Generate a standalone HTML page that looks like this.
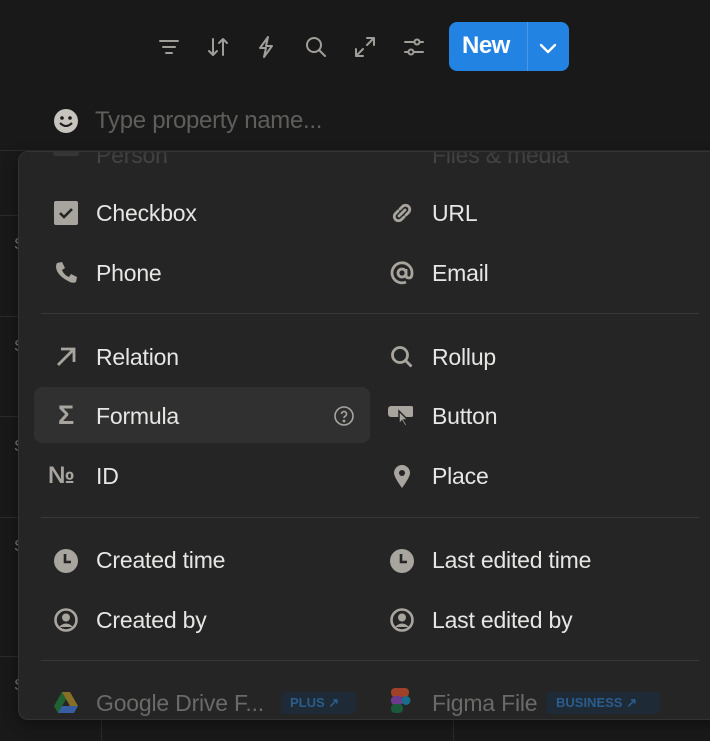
<!DOCTYPE html>
<html><head><meta charset="utf-8"><style>
*{margin:0;padding:0;box-sizing:border-box}
body{width:710px;height:741px;background:#191919;position:relative;overflow:hidden;font-family:"Liberation Sans",sans-serif;color:#e3e3e1}
.a{position:absolute}
.hl{position:absolute;left:0;height:1px;background:#2c2c2c}
.tb svg{position:absolute;top:35px}
.pop{position:absolute;left:18px;top:151px;width:720px;height:569px;background:#252525;border:1px solid #333;border-radius:10px;overflow:hidden;box-shadow:0 4px 14px rgba(0,0,0,.4)}
.it{position:absolute;font-size:23px;line-height:26px;color:#e6e6e4;white-space:nowrap;letter-spacing:-0.2px}
.ic{position:absolute;width:26px;height:26px}
.dv{position:absolute;left:22px;width:658px;height:1px;background:#383838}
</style></head><body>
<div class="hl" style="top:215px;width:20px"></div>
<div class="hl" style="top:316px;width:20px"></div>
<div class="hl" style="top:416px;width:20px"></div>
<div class="hl" style="top:517px;width:20px"></div>
<div class="hl" style="top:656px;width:20px"></div>
<div class="a" style="left:101px;top:720px;width:1px;height:21px;background:#2c2c2c"></div>
<div class="a" style="left:453px;top:720px;width:1px;height:21px;background:#2c2c2c"></div>
<div class="a" style="left:0;top:150px;width:710px;height:1px;background:#2c2c2c"></div>
<div class="a" style="left:14px;top:236px;font-size:16px;color:#777">S</div>
<div class="a" style="left:14px;top:338px;font-size:16px;color:#777">S</div>
<div class="a" style="left:14px;top:438px;font-size:16px;color:#777">S</div>
<div class="a" style="left:14px;top:538px;font-size:16px;color:#777">S</div>
<div class="a" style="left:14px;top:677px;font-size:16px;color:#777">S</div>

<div class="tb" style="stroke:#a09e99;fill:none;stroke-width:2;stroke-linecap:round;stroke-linejoin:round">
<svg style="left:157px" width="24" height="24"><path d="M3 6h18M6 12h12M9 18h6"/></svg>
<svg style="left:206px" width="24" height="24"><path d="M7 4v16M3 16l4 4 4-4M17 20V4M13 8l4-4 4 4"/></svg>
<svg style="left:254px" width="24" height="24"><path d="M14 2L6 13h6l-2 9 8-11h-6z"/></svg>
<svg style="left:304px" width="24" height="24"><circle cx="10" cy="10" r="7"/><path d="M15 15l6 6"/></svg>
<svg style="left:353px" width="24" height="24"><path d="M14 3h7v7M21 3l-7 7M10 21H3v-7M3 21l7-7"/></svg>
<svg style="left:402px" width="24" height="24"><path d="M3 7h18M3 17h18"/><circle cx="15" cy="7" r="2.5" fill="#191919"/><circle cx="9" cy="17" r="2.5" fill="#191919"/></svg>
</div>
<div class="a" style="left:449px;top:22px;width:120px;height:49px;background:#2383e2;border-radius:8px"></div>
<div class="a" style="left:527px;top:22px;width:1px;height:49px;background:#4a98e6"></div>
<div class="a" style="left:462px;top:32px;font-size:24px;font-weight:bold;color:#fff;letter-spacing:-0.5px">New</div>
<svg class="a" style="left:537px;top:38px" width="22" height="20"><path d="M4 7l7 7 7-7" stroke="#fff" stroke-width="2.4" fill="none" stroke-linecap="round" stroke-linejoin="round"/></svg>

<svg class="a" style="left:53px;top:108px" width="26" height="26"><circle cx="13" cy="13" r="12" fill="#c7c4bd"/><circle cx="9" cy="10" r="1.8" fill="#191919"/><circle cx="17" cy="10" r="1.8" fill="#191919"/><path d="M7 15q6 6 12 0" stroke="#191919" stroke-width="2" fill="none"/></svg>
<div class="a" style="left:95px;top:107px;font-size:24px;color:#5f5e5b;letter-spacing:-0.3px">Type property name...</div>

<div class="pop">
<div class="it" style="left:77px;top:-10px;color:#5a5a58">Person</div>
<div class="ic" style="left:34px;top:-8px;background:#4a4a48;border-radius:3px;height:12px"></div>
<div class="it" style="left:413px;top:-10px;color:#5a5a58">Files &amp; media</div>

<svg class="ic" style="left:34px;top:48px"><rect x="1" y="1" width="24" height="24" rx="2" fill="#a8a59f"/><path d="M7 13l4 4 8-8" stroke="#252525" stroke-width="2.6" fill="none"/></svg>
<div class="it" style="left:77px;top:48px">Checkbox</div>
<svg class="ic" style="left:370px;top:48px" fill="none" stroke="#a8a59f" stroke-width="2.8" stroke-linecap="round"><path d="M11 9l2.5-2.5a4 4 0 0 1 6 6L17 15M15 17l-2.5 2.5a4 4 0 0 1-6-6L9 11M10 16l6-6"/></svg>
<div class="it" style="left:413px;top:48px">URL</div>

<svg class="ic" style="left:34px;top:108px"><path d="M4 3l5-1 3 6-3 2q2 5 7 7l2-3 6 3-1 5q-3 2-8-1Q7 17 4 11 2 6 4 3z" fill="#a8a59f"/></svg>
<div class="it" style="left:77px;top:108px">Phone</div>
<svg class="ic" style="left:370px;top:108px" fill="none" stroke="#a8a59f" stroke-width="2.8"><circle cx="13" cy="13" r="4"/><path d="M17 9v6q0 3 3 3t3-5A10 10 0 1 0 17 22"/></svg>
<div class="it" style="left:413px;top:108px">Email</div>

<div class="dv" style="top:161px"></div>

<svg class="ic" style="left:34px;top:192px" fill="none" stroke="#a8a59f" stroke-width="2.8"><path d="M5 21L20 6M8 5h13v13"/></svg>
<div class="it" style="left:77px;top:192px">Relation</div>
<svg class="ic" style="left:370px;top:192px" fill="none" stroke="#a8a59f" stroke-width="2.8"><circle cx="11" cy="11" r="7.5"/><path d="M16.5 16.5l6 6"/></svg>
<div class="it" style="left:413px;top:192px">Rollup</div>

<div style="position:absolute;left:15px;top:235px;width:336px;height:56px;background:#303030;border-radius:8px"></div>
<div class="it" style="left:34px;top:250px;color:#a8a59f;font-size:27px;font-weight:bold;width:26px;text-align:center">Σ</div>
<div class="it" style="left:77px;top:251px">Formula</div>
<svg class="a" style="left:314px;top:253px" width="22" height="22" fill="none" stroke="#a8a59f" stroke-width="1.6"><circle cx="11" cy="11" r="9"/><path d="M8.5 9a2.5 2.5 0 1 1 3.5 2.3q-1 .5-1 1.7"/><circle cx="11" cy="16" r=".6" fill="#a8a59f"/></svg>
<svg class="ic" style="left:368px;top:251px"><rect x="1" y="3" width="26" height="11" rx="3" fill="#a8a59f"/><path d="M12 8l0 13 3-3 3 5 2-1-3-5h4z" fill="#a8a59f" stroke="#252525" stroke-width="1.5"/></svg>
<div class="it" style="left:413px;top:251px">Button</div>

<div class="it" style="left:29px;top:311px;color:#a8a59f;font-size:24px;font-weight:bold">№</div>
<div class="it" style="left:77px;top:311px">ID</div>
<svg class="ic" style="left:370px;top:311px"><path d="M13 25Q5 14 5 10a8 8 0 0 1 16 0q0 4-8 15z" fill="#a8a59f"/><circle cx="13" cy="10" r="3" fill="#252525"/></svg>
<div class="it" style="left:413px;top:311px">Place</div>

<div class="dv" style="top:365px"></div>

<svg class="ic" style="left:34px;top:396px"><circle cx="13" cy="13" r="12" fill="#a8a59f"/><path d="M12 6v8h6" stroke="#252525" stroke-width="2.6" fill="none"/></svg>
<div class="it" style="left:77px;top:395px">Created time</div>
<svg class="ic" style="left:370px;top:396px"><circle cx="13" cy="13" r="12" fill="#a8a59f"/><path d="M12 6v8h6" stroke="#252525" stroke-width="2.6" fill="none"/></svg>
<div class="it" style="left:413px;top:395px">Last edited time</div>

<svg class="ic" style="left:34px;top:455px"><circle cx="13" cy="13" r="10.5" fill="none" stroke="#a8a59f" stroke-width="2.6"/><circle cx="13" cy="10.5" r="4" fill="#a8a59f"/><path d="M6 20q7-7 14 0" fill="#a8a59f"/></svg>
<div class="it" style="left:77px;top:455px">Created by</div>
<svg class="ic" style="left:370px;top:455px"><circle cx="13" cy="13" r="10.5" fill="none" stroke="#a8a59f" stroke-width="2.6"/><circle cx="13" cy="10.5" r="4" fill="#a8a59f"/><path d="M6 20q7-7 14 0" fill="#a8a59f"/></svg>
<div class="it" style="left:413px;top:455px">Last edited by</div>

<div class="dv" style="top:508px"></div>

<svg class="ic" style="left:34px;top:538px"><path d="M9 2h8l8 14H17z" fill="#c9a227" opacity=".6"/><path d="M9 2l-8 14 4 7 8-14z" fill="#1e8e3e" opacity=".6"/><path d="M5 23h16l4-7H9z" fill="#4285f4" opacity=".6"/></svg>
<div class="it" style="left:77px;top:538px;color:#6a6a68">Google Drive F...</div>
<div class="a" style="left:262px;top:540px;width:75px;height:22px;background:#1e2a36;border-radius:4px;color:#2a5c8c;font-size:13px;font-weight:bold;line-height:22px;padding-left:9px;white-space:nowrap">PLUS ↗</div>
<svg class="ic" style="left:372px;top:536px"><rect x="0" y="0" width="12" height="9" rx="4" fill="#a0422a"/><rect x="6" y="0" width="12" height="9" rx="4" fill="#a0422a"/><rect x="0" y="8" width="12" height="9" rx="4" fill="#6a3a8c"/><circle cx="15" cy="12.5" r="4.5" fill="#1a6c8c"/><rect x="0" y="16" width="12" height="9" rx="4" fill="#1a5a3a"/></svg>
<div class="it" style="left:413px;top:538px;color:#6a6a68">Figma File</div>
<div class="a" style="left:527px;top:540px;width:114px;height:22px;background:#1e2a36;border-radius:4px;color:#2a5c8c;font-size:13px;font-weight:bold;line-height:22px;padding-left:10px;white-space:nowrap">BUSINESS ↗</div>
<div style="position:absolute;left:0;top:0;width:100%;height:18px;background:linear-gradient(rgba(37,37,37,.6),rgba(37,37,37,.2))"></div>
</div>
</body></html>
